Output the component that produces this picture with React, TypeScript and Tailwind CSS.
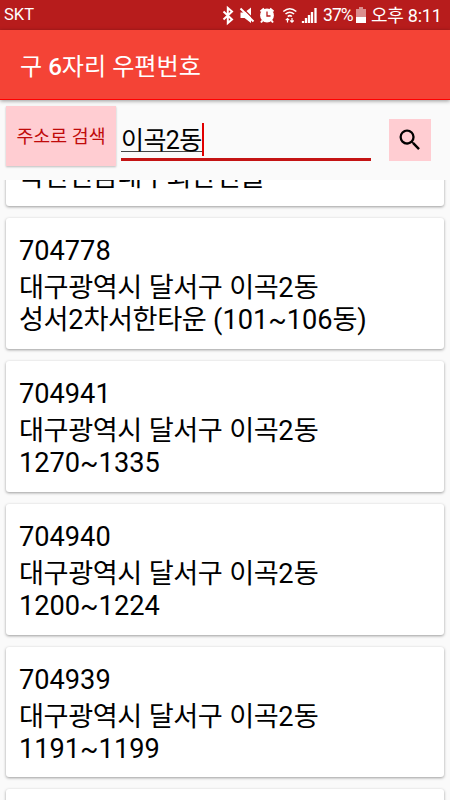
import React from "react";

const items = [
  ["", "", "국민연금대구회관건물"],
  ["704778", "대구광역시 달서구 이곡2동", "성서2차서한타운 (101~106동)"],
  ["704941", "대구광역시 달서구 이곡2동", "1270~1335"],
  ["704940", "대구광역시 달서구 이곡2동", "1200~1224"],
  ["704939", "대구광역시 달서구 이곡2동", "1191~1199"],
  ["", "", ""],
];

// Hangul is set slightly tighter than the digits around it.
function Mixed({ text }: { text: string }) {
  return (
    <>
      {text.split(/([가-힣]+)/).map((part, i) =>
        i % 2 ? (
          <span key={i} className="tracking-[-0.43px]">
            {part}
          </span>
        ) : (
          part
        ),
      )}
    </>
  );
}

function StatusIcons() {
  return (
    <svg width="104" height="30" viewBox="218 0 104 30" fill="none" stroke="#fff">
      <path d="M223.500 11.500l8.500 8-4.200 3.500V8l4.200 3.500-8.500 8" strokeWidth="2" />
      <path d="M240.500 12.500h4l6.500-5v15.500l-6.500-5h-4z" fill="#fff" stroke="none" />
      <path d="M242.500 8l13 13" stroke="#b71c1c" strokeWidth="1.300" />
      <path d="M240.500 8.500l13 13" strokeWidth="2" />
      <circle cx="267" cy="15.500" r="6.900" fill="#fff" stroke="none" />
      <path d="M260.500 11.500l3.500-3M273.500 11.500l-3.500-3M262.500 20.500l-1.500 2M271.500 20.500l1.500 2" strokeWidth="2" />
      <path d="M267 11.500V16h3.500" stroke="#b71c1c" strokeWidth="1.300" />
      <path d="M283.300 11.500q6.500-5.500 13 0M285.500 14q4.300-3.500 8.600 0M287.700 16.500q2.100-1.700 4.200 0" strokeWidth="1.600" />
      <path d="M287.500 22.500v-4m-1.700 1.700l1.700-1.700 1.700 1.700M292 18v4m-1.700-1.500l1.700 1.700 1.700-1.700" strokeWidth="1.200" />
      <path d="M303 21v2M306 18v5M309 15v8M312 12v11M315.500 8v15" strokeWidth="2.300" />
    </svg>
  );
}

export default function App() {
  return (
    <div className="flex h-[800px] w-[450px] flex-col overflow-hidden bg-[#fafafa] font-[Roboto,'Noto_Sans_CJK_KR',sans-serif] text-black">
      <div className="flex h-[30px] shrink-0 items-center bg-[#b71c1c] pl-1 text-[16.5px] text-white">
        <span>SKT</span>
        <div className="ml-auto flex h-[30px] w-[232px] items-center">
          <StatusIcons />
          <span className="ml-px w-[31px] text-[17.5px] tracking-[-0.9px]">37%</span>
          <svg className="ml-[2px]" width="10" height="16" viewBox="0 0 10 16">
            <path d="M3 0h4v2h3v14H0V2h3z" fill="#db8e8e" />
            <path d="M0 10h10v6H0z" fill="#fff" />
          </svg>
          <span className="ml-[5px] text-[18px] tracking-[-0.25px] whitespace-nowrap">오후 8:11</span>
        </div>
      </div>
      <header className="z-10 flex h-[70px] shrink-0 items-center border-b border-[#f00] bg-[#f44336] pt-[5px] pl-5 shadow-[0_1px_4px_rgba(0,0,0,0.4)]">
        <h1 className="text-[24.1px] text-white">
          구 <span className="font-medium">6</span>자리 우편번호
        </h1>
      </header>
      <div className="flex h-20 shrink-0 items-start">
        <button className="mt-[6px] ml-[6px] h-[60px] w-[110px] bg-[#ffcdd2] pt-[2px] text-[18.4px] whitespace-nowrap text-[#c00a0a] shadow-[0_1px_2px_rgba(0,0,0,0.25)]">
          주소로 검색
        </button>
        <div className="mt-[23px] ml-[5px] flex h-[38px] w-[250px] items-start border-b-[3px] border-[#c41414]">
          <span className="h-[29px] border-b border-[#444] pt-[2px] text-[25px] leading-[32px] tracking-[-0.6px] whitespace-nowrap">
            이곡2동
          </span>
          <span className="h-[33px] w-[2px] bg-[#e00000]" />
        </div>
        <button className="mt-[19px] ml-[18px] flex size-[42px] items-center justify-center bg-[#ffcdd2]">
          <svg width="28" height="28" viewBox="0 0 24 24">
            <path d="M15.500 14h-.79l-.28-.27A6.471 6.471 0 0 0 16 9.500 6.500 6.500 0 1 0 9.500 16c1.610 0 3.090-.59 4.230-1.570l.27.28v.79l5 4.990L20.490 19l-4.990-5zm-6 0C7.010 14 5 11.990 5 9.500S7.010 5 9.500 5 14 7.010 14 9.500 11.990 14 9.500 14z" />
          </svg>
        </button>
      </div>
      <main className="flex min-h-0 flex-1 flex-col overflow-hidden">
        <div className="-mt-[105px] flex flex-col gap-3 px-[6px]">
          {items.map(([code, area, detail], i) => (
            <article
              key={i}
              className="h-[130.900px] shrink-0 rounded-[3px] bg-white pt-[15px] pl-[13px] text-[27.2px] whitespace-nowrap shadow-[0_1px_3px_rgba(0,0,0,0.38)]"
            >
              <p className="h-[39px] leading-[36px]">{code}</p>
              <p className="h-8 leading-[32px]">
                <Mixed text={area} />
              </p>
              <p className="h-8 leading-[32px]">
                <Mixed text={detail} />
              </p>
            </article>
          ))}
        </div>
      </main>
    </div>
  );
}
